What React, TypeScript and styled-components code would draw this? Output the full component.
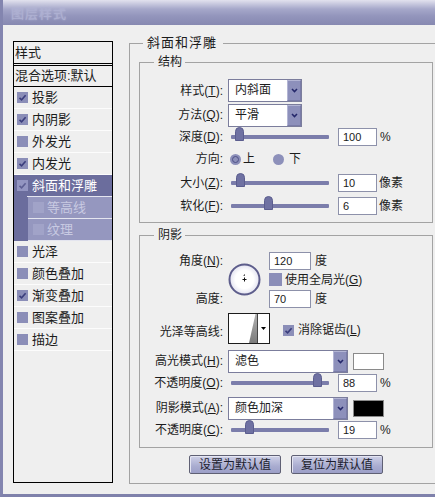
import React from 'react';
import styled, { createGlobalStyle } from 'styled-components';

const CJK = `"Liberation Sans", "Noto Sans CJK SC", "Noto Sans", sans-serif`;
const NUM = `"Liberation Sans", Arial, sans-serif`;

const GlobalStyle = createGlobalStyle`
  html, body {
    margin: 0;
    padding: 0;
    overflow: hidden;
    background: #efefef;
  }
  body {
    font-family: ${CJK};
    font-size: 12px;
    color: #1c1c1c;
  }
  * {
    box-sizing: border-box;
  }
`;

const Window = styled.div`
  width: 450px;
  height: 497px;
  display: flex;
  flex-direction: column;
  background: #efefef;
  border-left: 3px solid #8385af;
  border-bottom: 3px solid #7f81ab;
`;

const TitleBar = styled.div`
  flex: none;
  height: 25px;
  display: flex;
  align-items: center;
  padding-left: 8px;
  background: linear-gradient(#e2e2ee 0, #c7c8de 4px, #a6a8ca 9px, #9395bc 16px, #8789b1 25px);
  color: #aeb0d2;
  font-size: 13px;
  letter-spacing: 1px;
  text-shadow: 0 0 2px #b8bad8;
`;

const Body = styled.div`
  flex: 1;
  display: flex;
  align-items: flex-start;
  gap: 16px;
  padding: 16px 0 0 10px;
`;

/* ---------- left style list ---------- */

const StyleList = styled.div`
  flex: none;
  width: 100px;
  height: 442px;
  display: flex;
  flex-direction: column;
  border: 1px solid #000;
  background: #efefef;
  font-size: 13px;
`;

const ListHeader = styled.div`
  height: 24px;
  line-height: 21px;
  padding-left: 1px;
  border-bottom: 3px double #000;
`;

const BlendRow = styled.div`
  height: 21px;
  line-height: 20px;
  padding-left: 1px;
  border-bottom: 1px solid #000;
  white-space: nowrap;
`;

const Item = styled.div<{ $sel?: boolean }>`
  height: 22px;
  display: flex;
  align-items: center;
  gap: 4px;
  padding-left: 3px;
  line-height: 16px;
  white-space: nowrap;
  border-bottom: 1px solid #fcfcfc;
  background: ${p => (p.$sel ? '#6b6d9d' : 'transparent')};
  color: ${p => (p.$sel ? '#fff' : '#1c1c1c')};
  ${p =>
    p.$sel &&
    `border-image: linear-gradient(to right, #6b6d9d 14px, #e4e5ef 14px) 1;`}
`;

const SubRow = styled.div`
  height: 22px;
  display: flex;
  padding-left: 14px;
  background: #6b6d9d;
`;

const SubInner = styled.div`
  flex: 1;
  display: flex;
  align-items: center;
  gap: 3px;
  padding-left: 5px;
  line-height: 16px;
  background: #9597bf;
  border-bottom: 1px solid #e4e5ef;
  color: #c8cae2;
`;

const Box = styled.span<{ $tone: 'normal' | 'sel' | 'dim'; $size?: number }>`
  flex: none;
  width: ${p => p.$size ?? 11}px;
  height: ${p => p.$size ?? 11}px;
  display: flex;
  align-items: center;
  justify-content: center;
  background: ${p =>
    p.$tone === 'sel' ? '#9395c1' : p.$tone === 'dim' ? '#a1a3c8' : '#8b8eb8'};
`;

function CheckBox({
  on,
  tone = 'normal',
  size,
}: {
  on?: boolean;
  tone?: 'normal' | 'sel' | 'dim';
  size?: number;
}) {
  return (
    <Box $tone={tone} $size={size}>
      {on && (
        <svg width="9" height="9" viewBox="0 0 9 9">
          <path
            d="M1.5 4.8 L3.6 6.8 L7.6 2.2"
            fill="none"
            stroke={tone === 'sel' ? '#5d5f93' : '#3a3d7c'}
            strokeWidth="1.6"
          />
        </svg>
      )}
    </Box>
  );
}

type StyleItem = { label: string; on?: boolean; selected?: boolean; children?: string[] };

const styleItems: StyleItem[] = [
  { label: '投影', on: true },
  { label: '内阴影', on: true },
  { label: '外发光' },
  { label: '内发光', on: true },
  { label: '斜面和浮雕', on: true, selected: true, children: ['等高线', '纹理'] },
  { label: '光泽' },
  { label: '颜色叠加' },
  { label: '渐变叠加', on: true },
  { label: '图案叠加' },
  { label: '描边' },
];

function LeftList() {
  return (
    <StyleList>
      <ListHeader>样式</ListHeader>
      <BlendRow>混合选项:默认</BlendRow>
      {styleItems.map(item => (
        <React.Fragment key={item.label}>
          <Item $sel={item.selected}>
            <CheckBox on={item.on} tone={item.selected ? 'sel' : 'normal'} />
            <span>{item.label}</span>
          </Item>
          {item.children?.map(c => (
            <SubRow key={c}>
              <SubInner>
                <CheckBox tone="dim" />
                <span>{c}</span>
              </SubInner>
            </SubRow>
          ))}
        </React.Fragment>
      ))}
    </StyleList>
  );
}

/* ---------- right panel ---------- */

const OuterGroup = styled.div`
  flex: none;
  width: 314px;
  margin-top: 2px;
  display: flex;
  flex-direction: column;
  padding: 0 9px 9px;
  border: 1px solid #a3a3a3;
`;

const OuterTitle = styled.div`
  align-self: flex-start;
  height: 16px;
  margin: -9px 0 0 4px;
  padding: 0 6px 0 4px;
  background: #efefef;
  font-size: 13px;
  line-height: 16px;
  letter-spacing: 1px;
`;

const InnerGroup = styled.div<{ $mt: number; $pb: number }>`
  display: flex;
  flex-direction: column;
  margin-top: ${p => p.$mt}px;
  padding-bottom: ${p => p.$pb}px;
  border: 1px solid #a3a3a3;
`;

const InnerTitle = styled.div`
  align-self: flex-start;
  height: 14px;
  margin: -8px 0 9px 14px;
  padding: 0 3px 0 4px;
  background: #efefef;
  line-height: 14px;
`;

const Row = styled.div<{ $h: number; $mt?: number }>`
  display: flex;
  align-items: center;
  height: ${p => p.$h}px;
  margin-top: ${p => p.$mt ?? 0}px;
  white-space: nowrap;
`;

const Label = styled.div<{ $drop?: number }>`
  flex: none;
  width: 88px;
  padding-right: 5px;
  padding-top: ${p => p.$drop ?? 0}px;
  text-align: right;
  line-height: 16px;
  white-space: nowrap;
`;

const SelectBox = styled.div<{ $w: number }>`
  flex: none;
  width: ${p => p.$w}px;
  height: 23px;
  display: flex;
  align-items: stretch;
  border: 1px solid #7b7d9c;
  background: #fff;
`;

const SelectText = styled.span`
  flex: 1;
  padding-left: 6px;
  line-height: 21px;
`;

const SelectButton = styled.span`
  width: 14px;
  display: flex;
  align-items: center;
  justify-content: center;
  background: #8d90bb;
  border: 1px solid #b3b5d4;
  border-right-color: #7a7ca8;
  border-bottom-color: #7a7ca8;
`;

function Select({ value, width }: { value: string; width: number }) {
  return (
    <SelectBox $w={width}>
      <SelectText>{value}</SelectText>
      <SelectButton>
        <svg width="7" height="5" viewBox="0 0 7 5">
          <path d="M1 1 L3.5 3.6 L6 1" fill="none" stroke="#24276a" strokeWidth="1.5" />
        </svg>
      </SelectButton>
    </SelectBox>
  );
}

const SliderTrack = styled.div`
  position: relative;
  flex: none;
  width: 98px;
  height: 4px;
  margin: 0 9px 0 3px;
  background: #7b7dab;
  border-radius: 1px;
`;

const Thumb = styled.svg`
  position: absolute;
  top: -8px;
  margin-left: -4.5px;
`;

function Slider({ pct }: { pct: number }) {
  return (
    <SliderTrack>
      <Thumb width="9" height="14" viewBox="0 0 9 14" style={{ left: `${pct}%` }}>
        <path
          d="M0.5 4.5 Q0.5 0.5 4.5 0.5 Q8.5 0.5 8.5 4.5 V13.5 H0.5 Z"
          fill="#6f71a2"
          stroke="#5b5d8e"
        />
      </Thumb>
    </SliderTrack>
  );
}

const NumBox = styled.div<{ $w: number }>`
  flex: none;
  width: ${p => p.$w}px;
  height: 18px;
  padding-left: 4px;
  border: 1px solid #8d91aa;
  background: #fff;
  font-family: ${NUM};
  font-size: 11px;
  line-height: 16px;
  color: #1a1a1a;
`;

const Unit = styled.span<{ $ml: number }>`
  margin-left: ${p => p.$ml}px;
  line-height: 16px;
`;

const RadioWrap = styled.span<{ $gap: number; $ml?: number; $mr?: number }>`
  display: flex;
  align-items: center;
  gap: ${p => p.$gap}px;
  margin-left: ${p => p.$ml ?? 0}px;
  margin-right: ${p => p.$mr ?? 0}px;
  line-height: 16px;
`;

const RadioDot = styled.span<{ $on?: boolean }>`
  flex: none;
  width: 11px;
  height: 11px;
  border-radius: 50%;
  background: #8d90ba;
  display: flex;
  align-items: center;
  justify-content: center;

  &::after {
    content: '';
    display: ${p => (p.$on ? 'block' : 'none')};
    width: 5px;
    height: 5px;
    border-radius: 50%;
    border: 1px solid #4d5086;
  }
`;

const AngleGrid = styled.div`
  display: grid;
  grid-template-columns: 88px 41px 1fr;
  grid-template-rows: 19px 19px 19px;
  align-items: center;
  white-space: nowrap;
`;

const AngleDial = styled.svg`
  grid-column: 2;
  grid-row: 1 / 4;
  justify-self: start;
`;

const Cell = styled.div<{ $col: number; $row: number }>`
  grid-column: ${p => p.$col};
  grid-row: ${p => p.$row};
  display: flex;
  align-items: center;
  gap: 3px;
  line-height: 16px;
`;

const GridLabel = styled(Label)<{ $row: number }>`
  grid-column: 1;
  grid-row: ${p => p.$row};
`;

const ContourBox = styled.div`
  flex: none;
  width: 42px;
  height: 31px;
  display: flex;
  border: 1px solid #1c1c1c;
  background: #fff;
`;

const ContourArrow = styled.span`
  flex: 1;
  display: flex;
  align-items: center;
  justify-content: center;
  border-left: 1px solid #444;
`;

const CheckLabel = styled.span<{ $ml: number }>`
  display: flex;
  align-items: center;
  gap: 4px;
  margin-left: ${p => p.$ml}px;
  padding-top: 3px;
  line-height: 16px;
`;

const Swatch = styled.span<{ $color: string }>`
  flex: none;
  width: 31px;
  height: 17px;
  margin-left: 5px;
  border: 1px solid #8a8a8a;
  background: ${p => p.$color};
`;

const ButtonRow = styled.div`
  display: flex;
  justify-content: center;
  gap: 10px;
  margin-top: 7px;
`;

const Button = styled.div`
  width: 92px;
  height: 19px;
  display: flex;
  align-items: center;
  justify-content: center;
  border: 1px solid #5f6074;
  border-radius: 2px;
  background: linear-gradient(#cfd1e7, #a9acd0 60%, #9c9fc7);
  box-shadow: inset 1px 1px 0 #e4e5f2;
  color: #1c1d2e;
  font-size: 12px;
  line-height: 16px;
`;

function RightPanel() {
  return (
    <OuterGroup>
      <OuterTitle>斜面和浮雕</OuterTitle>

      <InnerGroup $mt={11} $pb={5}>
        <InnerTitle>结构</InnerTitle>
        <Row $h={25}>
          <Label>
            样式(<u>T</u>):
          </Label>
          <Select value="内斜面" width={74} />
        </Row>
        <Row $h={24}>
          <Label>
            方法(<u>Q</u>):
          </Label>
          <Select value="平滑" width={74} />
        </Row>
        <Row $h={19}>
          <Label>
            深度(<u>D</u>):
          </Label>
          <Slider pct={9} />
          <NumBox $w={39}>100</NumBox>
          <Unit $ml={3}>%</Unit>
        </Row>
        <Row $h={26}>
          <Label>方向:</Label>
          <RadioWrap $gap={2} $ml={2} $mr={18}>
            <RadioDot $on />
            <span>上</span>
          </RadioWrap>
          <RadioWrap $gap={5}>
            <RadioDot />
            <span>下</span>
          </RadioWrap>
        </Row>
        <Row $h={22}>
          <Label>
            大小(<u>Z</u>):
          </Label>
          <Slider pct={10} />
          <NumBox $w={39}>10</NumBox>
          <Unit $ml={2}>像素</Unit>
        </Row>
        <Row $h={23}>
          <Label>
            软化(<u>F</u>):
          </Label>
          <Slider pct={38} />
          <NumBox $w={39}>6</NumBox>
          <Unit $ml={2}>像素</Unit>
        </Row>
      </InnerGroup>

      <InnerGroup $mt={12} $pb={8}>
        <InnerTitle>阴影</InnerTitle>
        <AngleGrid>
          <GridLabel $row={1}>
            角度(<u>N</u>):
          </GridLabel>
          <AngleDial width="33" height="33" viewBox="0 0 33 33">
            <defs>
              <radialGradient id="dialFill" cx="0.5" cy="0.5" r="0.5">
                <stop offset="0.6" stopColor="#ffffff" />
                <stop offset="1" stopColor="#e2e2f0" />
              </radialGradient>
            </defs>
            <circle cx="16.5" cy="16.5" r="15" fill="url(#dialFill)" stroke="#5d5d8b" strokeWidth="2" />
            <path d="M14.5 16.5 H18.5 M16.5 14.5 V18.5" stroke="#111" strokeWidth="1" />
            <path d="M16 13 L16.5 11.5" stroke="#111" strokeWidth="1" />
          </AngleDial>
          <Cell $col={3} $row={1}>
            <NumBox $w={42}>120</NumBox>
            <Unit $ml={1}>度</Unit>
          </Cell>
          <Cell $col={3} $row={2}>
            <CheckBox size={13} />
            <span>
              使用全局光(<u>G</u>)
            </span>
          </Cell>
          <GridLabel $row={3}>高度:</GridLabel>
          <Cell $col={3} $row={3}>
            <NumBox $w={42}>70</NumBox>
            <Unit $ml={1}>度</Unit>
          </Cell>
        </AngleGrid>

        <Row $h={31} $mt={5}>
          <Label $drop={6}>光泽等高线:</Label>
          <ContourBox>
            <svg width="28" height="29" viewBox="0 0 28 29">
              <defs>
                <linearGradient id="contourFill" x1="0" y1="0" x2="0" y2="1">
                  <stop offset="0" stopColor="#b0b0b0" />
                  <stop offset="1" stopColor="#7c7c7c" />
                </linearGradient>
              </defs>
              <polygon points="20,29 26.5,0 28,0 28,29" fill="url(#contourFill)" />
            </svg>
            <ContourArrow>
              <svg width="5" height="3" viewBox="0 0 5 3">
                <polygon points="0,0 5,0 2.5,3" fill="#000" />
              </svg>
            </ContourArrow>
          </ContourBox>
          <CheckLabel $ml={13}>
            <CheckBox on />
            <span>
              消除锯齿(<u>L</u>)
            </span>
          </CheckLabel>
        </Row>

        <Row $h={24} $mt={5}>
          <Label>
            高光模式(<u>H</u>):
          </Label>
          <Select value="滤色" width={120} />
          <Swatch $color="#ffffff" />
        </Row>
        <Row $h={19}>
          <Label>
            不透明度(<u>O</u>):
          </Label>
          <Slider pct={88} />
          <NumBox $w={39}>88</NumBox>
          <Unit $ml={3}>%</Unit>
        </Row>
        <Row $h={24} $mt={4}>
          <Label>
            阴影模式(<u>A</u>):
          </Label>
          <Select value="颜色加深" width={120} />
          <Swatch $color="#000000" />
        </Row>
        <Row $h={19}>
          <Label>
            不透明度(<u>C</u>):
          </Label>
          <Slider pct={19} />
          <NumBox $w={39}>19</NumBox>
          <Unit $ml={3}>%</Unit>
        </Row>
      </InnerGroup>

      <ButtonRow>
        <Button>设置为默认值</Button>
        <Button>复位为默认值</Button>
      </ButtonRow>
    </OuterGroup>
  );
}

export default function App() {
  return (
    <>
      <GlobalStyle />
      <Window>
        <TitleBar>图层样式</TitleBar>
        <Body>
          <LeftList />
          <RightPanel />
        </Body>
      </Window>
    </>
  );
}
